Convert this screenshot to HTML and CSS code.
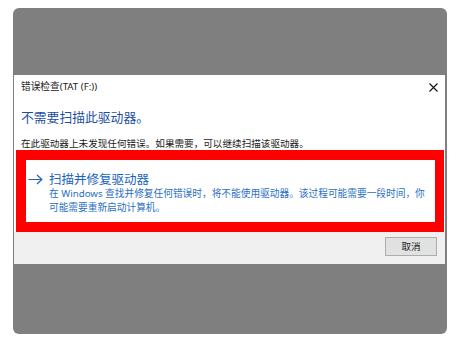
FILE: index.html
```html
<!DOCTYPE html>
<html lang="zh-CN">
<head>
<meta charset="utf-8">
<title>错误检查</title>
<link rel="stylesheet" href="styles.css">
</head>
<body>
<div class="panel">
  <div class="dialog">
    <div class="titlebar">
      <span class="title">错误检查(TAT (F:))</span>
      <svg class="close" width="9" height="9" viewBox="0 0 9 9"><path d="M0.5 0.5 L8.5 8.5 M8.5 0.5 L0.5 8.5" stroke="#111" stroke-width="1.1" fill="none"/></svg>
    </div>
    <div class="content">
      <div class="heading">不需要扫描此驱动器。</div>
      <div class="body">在此驱动器上未发现任何错误。如果需要，可以继续扫描该驱动器。</div>
      <div class="highlight">
        <div class="cmdlink">
          <svg class="arrow" width="15" height="11" viewBox="0 0 15 11"><path d="M0.5 5.5 H13.5 M9 1 L13.8 5.5 L9 10" stroke="#1f63bd" stroke-width="1.2" fill="none"/></svg>
          <div class="cmdtext">
            <div class="cmdtitle">扫描并修复驱动器</div>
            <div class="cmddesc"><span class="line">在 Windows 查找并修复任何错误时，将不能使用驱动器。该过程可能需要一段时间，你</span><span class="line">可能需要重新启动计算机。</span></div>
          </div>
        </div>
      </div>
    </div>
    <div class="footer">
      <button class="btn">取消</button>
    </div>
  </div>
</div>
</body>
</html>
```

FILE: styles.css
```css
html, body {
  margin: 0;
  padding: 0;
  background: #ffffff;
}

body {
  font-family: "Noto Sans", "Noto Sans CJK SC", sans-serif;
}

.panel {
  margin: 8px 0 0 13px;
  width: 434px;
  height: 326px;
  box-sizing: border-box;
  padding-top: 67px;
  background: #7f7f7f;
  border-radius: 6px;
  display: flex;
  flex-direction: column;
}

.dialog {
  margin: 0 2px 0 1px;
  background: #ffffff;
  display: flex;
  flex-direction: column;
}

.titlebar {
  height: 24px;
  display: flex;
  align-items: center;
  justify-content: space-between;
  padding: 0 7px 0 7px;
}

.title {
  font-size: 9.7px;
  line-height: 12px;
  color: #1a1a1a;
}

.close {
  display: block;
  margin-top: 1px;
}

.content {
  display: flex;
  flex-direction: column;
}

.heading {
  margin-top: 9px;
  padding-left: 7px;
  font-family: "Noto Sans CJK SC", sans-serif;
  font-size: 12.8px;
  line-height: 18px;
  color: #1d4fa6;
}

.body {
  margin-top: 10px;
  padding-left: 7px;
  font-family: "Noto Sans CJK SC", sans-serif;
  font-size: 9.6px;
  line-height: 14px;
  color: #1a1a1a;
  white-space: nowrap;
}

.highlight {
  margin: 0 1px 0 2px;
  border-style: solid;
  border-color: #ff0000;
  border-width: 10px 9px 10px 10px;
  background: #ffffff;
}

.cmdlink {
  display: flex;
  align-items: flex-start;
  padding: 10px 0 7px 2px;
}

.arrow {
  display: block;
  margin-top: 4px;
  flex: none;
}

.cmdtext {
  margin-left: 6px;
  display: flex;
  flex-direction: column;
}

.cmdtitle {
  font-family: "Noto Sans CJK SC", sans-serif;
  font-size: 12.5px;
  line-height: 17px;
  color: #1764c0;
}

.cmddesc {
  display: flex;
  flex-direction: column;
  font-size: 9.7px;
  line-height: 14px;
  color: #2a6fc4;
}

.line {
  display: block;
  white-space: nowrap;
}

.footer {
  height: 32px;
  background: #f0f0f0;
  display: flex;
  justify-content: flex-end;
  align-items: flex-start;
  padding-right: 8px;
}

.btn {
  margin-top: 5px;
  width: 52px;
  height: 19px;
  padding: 0;
  background: #e1e1e1;
  border: 1px solid #adadad;
  font-family: "Noto Sans CJK SC", sans-serif;
  font-size: 9.6px;
  line-height: 15px;
  color: #1a1a1a;
}
```
